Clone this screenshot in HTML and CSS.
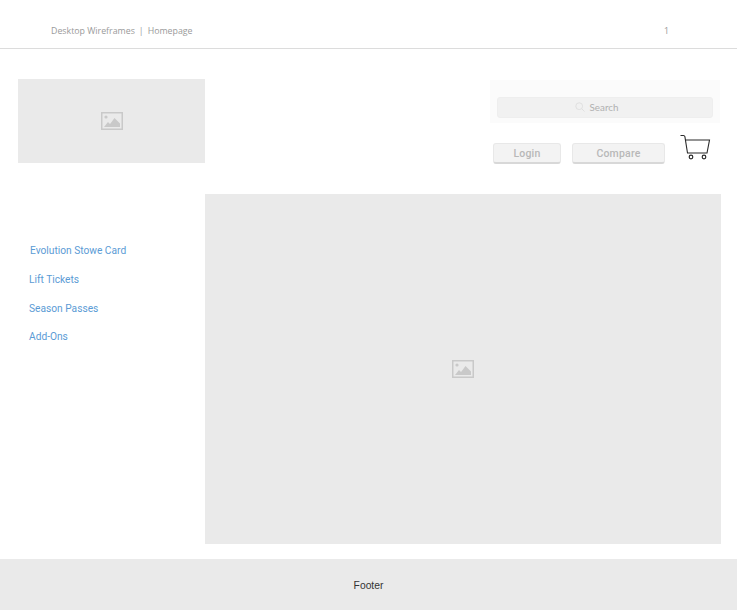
FILE: index.html
```html
<!DOCTYPE html>
<html lang="en">
<head>
<meta charset="utf-8">
<title>Desktop Wireframes | Homepage</title>
<link rel="stylesheet" href="styles.css">
</head>
<body>
<header class="topbar">
  <span class="topbar-title">Desktop Wireframes<span class="topbar-sep">|</span>Homepage</span>
  <span class="topbar-page">1</span>
</header>
<section class="masthead">
  <div class="logo">
    <svg class="picture-icon" viewBox="0 0 22 18" width="22" height="18" aria-hidden="true">
      <rect x="0.75" y="0.75" width="20.5" height="16.5" fill="none" stroke="#c9c9c9" stroke-width="1.5"/>
      <circle cx="5" cy="5" r="1.6" fill="#c9c9c9"/>
      <path d="M3 15l4-5 2 2 4.500-6 5.500 5.500V15z" fill="#c9c9c9"/>
    </svg>
  </div>
  <div class="tools">
    <div class="search-panel">
      <div class="search-field">
        <svg class="search-icon" viewBox="0 0 10 10" width="10" height="10" aria-hidden="true">
          <circle cx="4.200" cy="4.200" r="3.400" fill="none" stroke="#dcdcdc" stroke-width="0.8"/>
          <path d="M6.800 6.800L9.500 9.500" stroke="#dcdcdc" stroke-width="0.8"/>
        </svg>
        <span>Search</span>
      </div>
    </div>
    <div class="actions">
      <button class="btn btn-login" type="button">Login</button>
      <button class="btn btn-compare" type="button">Compare</button>
      <svg class="cart" viewBox="0 0 31 26" width="31" height="26" aria-hidden="true">
        <path d="M0.500 1.500h3c.8 0 1.200.4 1.400 1.200L7.500 19H27L29.500 6H5" fill="none" stroke="#2a2a2a" stroke-width="1.100"/>
        <circle cx="11" cy="23" r="1.800" fill="none" stroke="#2a2a2a" stroke-width="1.200"/>
        <circle cx="24" cy="23" r="1.800" fill="none" stroke="#2a2a2a" stroke-width="1.200"/>
      </svg>
    </div>
  </div>
</section>
<section class="content">
  <nav class="sidenav">
    <a class="nav-link nav-first" href="#">Evolution Stowe Card</a>
    <a class="nav-link" href="#">Lift Tickets</a>
    <a class="nav-link" href="#">Season Passes</a>
    <a class="nav-link" href="#">Add-Ons</a>
  </nav>
  <div class="hero">
    <svg class="picture-icon" viewBox="0 0 22 18" width="22" height="18" aria-hidden="true">
      <rect x="0.75" y="0.75" width="20.5" height="16.5" fill="none" stroke="#c9c9c9" stroke-width="1.5"/>
      <circle cx="5" cy="5" r="1.6" fill="#c9c9c9"/>
      <path d="M3 15l4-5 2 2 4.500-6 5.500 5.500V15z" fill="#c9c9c9"/>
    </svg>
  </div>
</section>
<footer class="footer">Footer</footer>
</body>
</html>
```
FILE: styles.css
```css
* { box-sizing: border-box; }
html, body { margin: 0; padding: 0; }
body {
  width: 737px;
  height: 610px;
  overflow: hidden;
  background: #fff;
  font-family: "Open Sans", "Liberation Sans", sans-serif;
}
.topbar {
  height: 49px;
  border-bottom: 1px solid #dcdcdc;
  padding: 14px 68px 0 51px;
  display: flex;
  align-items: center;
  justify-content: space-between;
  font-size: 8.800px;
  color: #9a9a9a;
}
.topbar-sep { margin: 0 4px; }
.masthead {
  margin-top: 30px;
  padding: 0 16px 0 18px;
  height: 84px;
  display: flex;
  justify-content: space-between;
}
.logo {
  width: 187px;
  height: 84px;
  background: #eaeaea;
  display: flex;
  align-items: center;
  justify-content: center;
}
.tools {
  width: 231px;
  display: flex;
  flex-direction: column;
}
.search-panel {
  margin-top: 1px;
  margin-right: 1px;
  height: 43px;
  background: #fbfbfb;
  padding: 17px 7px 5px 7px;
}
.search-field {
  height: 21px;
  background: #f1f1f1;
  border-radius: 3px;
  border: 1px solid #eeeeee;
  display: flex;
  align-items: center;
  justify-content: center;
  gap: 5px;
  font-family: "Lato", sans-serif;
  font-size: 9.800px;
  color: #b0b0b0;
  padding: 0 17px 2px 0;
}
.actions {
  margin-top: 10px;
  padding-left: 3px;
  display: flex;
  align-items: flex-start;
}
.btn {
  height: 21px;
  margin-top: 10px;
  padding: 0;
  background: #f3f3f3;
  border: 1px solid #e8e8e8;
  border-bottom: 2px solid #d8d8d8;
  border-radius: 3px;
  font-family: "Roboto", sans-serif;
  font-weight: 500;
  font-size: 10.500px;
  letter-spacing: 0.200px;
  color: #b8b8b8;
}
.btn-login { width: 68px; }
.btn-compare { width: 93px; margin-left: 11px; }
.cart { margin-left: 15px; margin-top: 1px; }
.content {
  margin-top: 31px;
  display: flex;
  height: 350px;
}
.sidenav {
  width: 205px;
  padding: 49px 0 0 29px;
  display: flex;
  flex-direction: column;
  gap: 13.800px;
  font-family: "Roboto", sans-serif;
  font-size: 10.200px;
  line-height: 15px;
}
.nav-link {
  color: #5b9bd5;
  text-decoration: none;
}
.nav-first { padding-left: 1px; }
.hero {
  width: 516px;
  background: #eaeaea;
  display: flex;
  align-items: center;
  justify-content: center;
}
.footer {
  margin-top: 15px;
  height: 51px;
  padding-top: 2px;
  background: #eaeaea;
  display: flex;
  align-items: center;
  justify-content: center;
  font-family: "Liberation Sans", sans-serif;
  font-size: 10.300px;
  color: #333;
}
```
